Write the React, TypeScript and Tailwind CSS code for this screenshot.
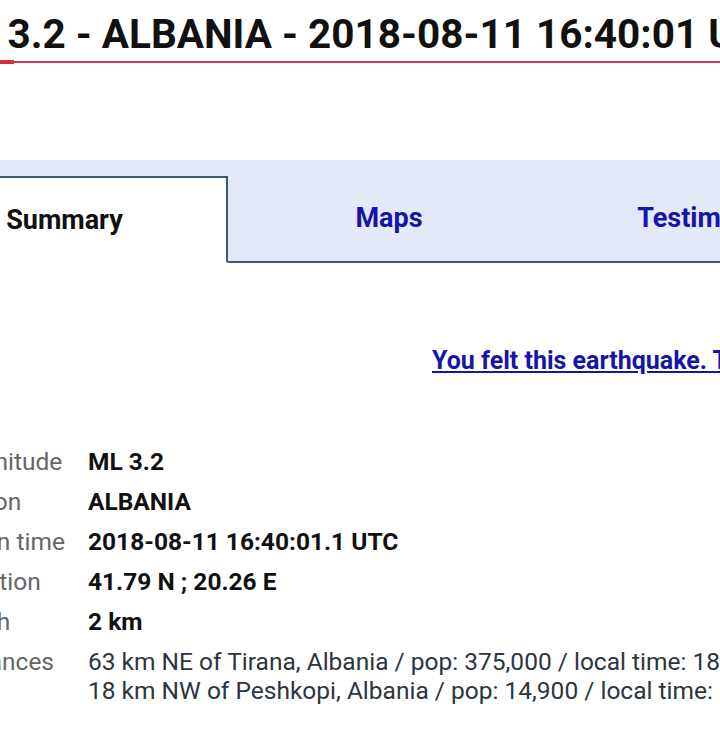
import React from 'react';

const details = [
  { label: 'Magnitude', value: 'ML 3.2' },
  { label: 'Region', value: 'ALBANIA' },
  { label: 'Origin time', value: '2018-08-11 16:40:01.1 UTC' },
  { label: 'Location', value: '41.79 N ; 20.26 E' },
  { label: 'Depth', value: '2 km' },
];

const distances = [
  '63 km NE of Tirana, Albania / pop: 375,000 / local time: 18:40:01.1 2018-08-11',
  '18 km NW of Peshkopi, Albania / pop: 14,900 / local time: 18:40:01.1 2018-08-11',
];

function App() {
  return (
    <div className="w-[720px] h-[731px] overflow-hidden bg-white font-['Roboto',sans-serif]">
      {/* Title */}
      <h1 className="ml-[-38px] pt-[10px] text-[40.5px] leading-[48px] font-bold text-[#111] whitespace-nowrap">
        M 3.2 - ALBANIA - 2018-08-11 16:40:01 UTC
      </h1>
      <div className="flex items-start mt-[2px]">
        <div className="w-[14px] h-[4px] bg-[#d0313a]" />
        <div className="flex-1 h-[2px] mt-[1px] bg-[#cf3b42]" />
      </div>

      {/* Tabs */}
      <div className="mt-[96px] ml-[-99px] w-[1100px] bg-[#e3e9f7] pt-[16px] flex">
        <div className="w-[325px] h-[87px] bg-white border-t-2 border-l-2 border-[#3f5878] flex items-center justify-center text-[27px] font-bold text-[#111]">
          Summary
        </div>
        <div className="w-[324px] h-[87px] border-l-2 border-b-2 border-[#3f5878] rounded-bl-[3px] flex items-center justify-center text-[27px] font-bold text-[#1515a8]">
          Maps
        </div>
        <div className="w-[324px] h-[87px] border-b-2 border-[#3f5878] flex items-center justify-center text-[27px] font-bold text-[#1515a8]">
          Testimonies
        </div>
      </div>

      {/* Felt link */}
      <div className="mt-[82px] ml-[432px] whitespace-nowrap">
        <a href="#" className="text-[25px] leading-[32px] font-bold text-[#1515a8] underline">
          You felt this earthquake. Tell us!
        </a>
      </div>

      {/* Details */}
      <div className="mt-[70px] ml-[-54px] grid grid-cols-[142px_1fr] gap-y-[11px] text-[24.5px] leading-[29px] whitespace-nowrap">
        {details.map((d) => (
          <React.Fragment key={d.label}>
            <div className="text-[#666]">{d.label}</div>
            <div className="font-bold text-[#111]">{d.value}</div>
          </React.Fragment>
        ))}
        <div className="text-[#666]">Distances</div>
        <div className="text-[#2c3540]">
          {distances.map((line) => (
            <div key={line}>{line}</div>
          ))}
        </div>
      </div>
    </div>
  );
}

export default App;
